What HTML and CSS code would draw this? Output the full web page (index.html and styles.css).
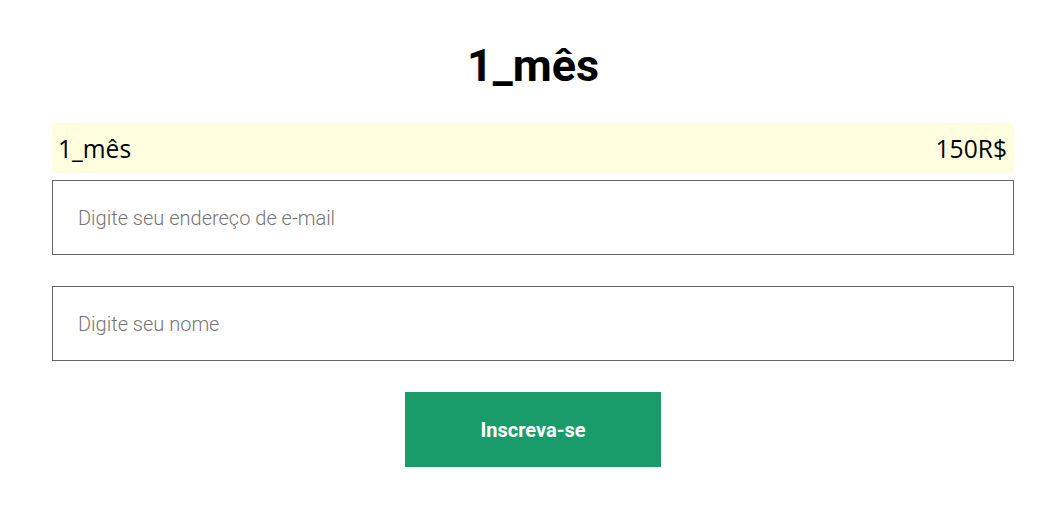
FILE: index.html
```html
<!DOCTYPE html>
<html>
<head>
  <meta charset="utf-8">
  <title>1_mês</title>
  <link rel="stylesheet" href="styles.css">
</head>
<body>
  <div class="container">
    <h1>1_mês</h1>

    <div class="plan-row">
      <span>1_mês</span>
      <span>150R$</span>
    </div>

    <form class="signup-form">
      <input type="email" placeholder="Digite seu endereço de e-mail">
      <input type="text" placeholder="Digite seu nome">
      <button type="button" class="signup-btn">Inscreva-se</button>
    </form>
  </div>
</body>
</html>
```

FILE: styles.css
```css
body {
  margin: 0;
  font-family: 'Roboto', sans-serif;
  background: #fff;
  color: #000;
}

.container {
  width: 962px;
  margin-left: 52px;
  padding-top: 37px;
}

h1 {
  margin: 0 0 28px;
  text-align: center;
  font-size: 45px;
  font-weight: 700;
  line-height: 58px;
}

.plan-row {
  display: flex;
  justify-content: space-between;
  align-items: center;
  height: 50px;
  padding: 0 7px 0 6px;
  background-color: #ffffe0;
  font-family: 'Open Sans', sans-serif;
  font-size: 24.6px;
}

.signup-form {
  display: flex;
  flex-direction: column;
  align-items: center;
  gap: 31px;
  margin-top: 7px;
}

.signup-form input {
  box-sizing: border-box;
  width: 100%;
  height: 75px;
  padding: 0 25px;
  border: 1px solid #666;
  border-radius: 0;
  font-family: 'Roboto', sans-serif;
  font-weight: 300;
  font-size: 20px;
  color: #333;
  outline: none;
}

.signup-form input::placeholder {
  color: #757575;
}

.signup-btn {
  width: 256px;
  height: 75px;
  border: none;
  background-color: #1a9c6a;
  color: #fff;
  font-family: 'Roboto', sans-serif;
  font-weight: 700;
  font-size: 20px;
  cursor: pointer;
}
```
